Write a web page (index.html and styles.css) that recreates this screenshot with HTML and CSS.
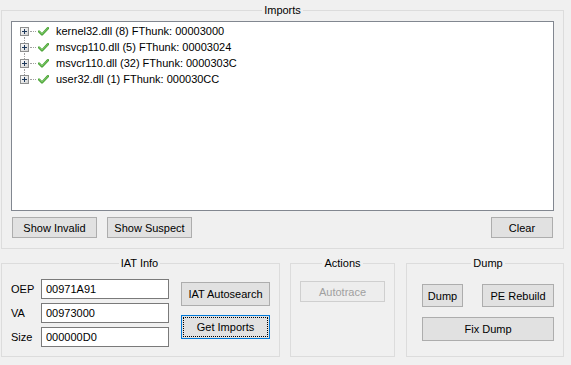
FILE: index.html
```html
<!DOCTYPE html>
<html lang="en">
<head>
    <meta charset="UTF-8">
    <title>Scylla - Imports</title>
    <link rel="stylesheet" href="styles.css">
</head>
<body>
    <div class="window">
        <fieldset class="group imports-group">
            <legend>Imports</legend>
            <div class="tree">
                <div class="tree-row">
                    <span class="expander"><svg width="9" height="9" viewBox="0 0 9 9"><defs><linearGradient id="bx" x1="0" y1="0" x2="1" y2="1"><stop offset="0" stop-color="#ffffff"/><stop offset="1" stop-color="#d2d2d2"/></linearGradient></defs><rect x="0.5" y="0.5" width="8" height="8" fill="url(#bx)" stroke="#8e8f8f"/><path d="M2 4.5h5M4.5 2v5" stroke="#1e395b" stroke-width="1"/></svg></span>
                    <span class="connector"></span>
                    <svg class="check" width="11" height="9" viewBox="0 0 11 9"><path d="M1 4.5l3 3L10 1.2" fill="none" stroke="#4ea33a" stroke-width="2.4" stroke-linecap="round" stroke-linejoin="round"/><path d="M1.4 4.6l2.6 2.5L9.8 1.5" fill="none" stroke="#7fd06a" stroke-width="0.9" stroke-linecap="round"/></svg>
                    <span class="tree-text">kernel32.dll (8) FThunk: 00003000</span>
                </div>
                <div class="tree-row">
                    <span class="expander"><svg width="9" height="9" viewBox="0 0 9 9"><rect x="0.5" y="0.5" width="8" height="8" fill="url(#bx)" stroke="#8e8f8f"/><path d="M2 4.5h5M4.5 2v5" stroke="#1e395b" stroke-width="1"/></svg></span>
                    <span class="connector"></span>
                    <svg class="check" width="11" height="9" viewBox="0 0 11 9"><path d="M1 4.5l3 3L10 1.2" fill="none" stroke="#4ea33a" stroke-width="2.4" stroke-linecap="round" stroke-linejoin="round"/><path d="M1.4 4.6l2.6 2.5L9.8 1.5" fill="none" stroke="#7fd06a" stroke-width="0.9" stroke-linecap="round"/></svg>
                    <span class="tree-text">msvcp110.dll (5) FThunk: 00003024</span>
                </div>
                <div class="tree-row">
                    <span class="expander"><svg width="9" height="9" viewBox="0 0 9 9"><rect x="0.5" y="0.5" width="8" height="8" fill="url(#bx)" stroke="#8e8f8f"/><path d="M2 4.5h5M4.5 2v5" stroke="#1e395b" stroke-width="1"/></svg></span>
                    <span class="connector"></span>
                    <svg class="check" width="11" height="9" viewBox="0 0 11 9"><path d="M1 4.5l3 3L10 1.2" fill="none" stroke="#4ea33a" stroke-width="2.4" stroke-linecap="round" stroke-linejoin="round"/><path d="M1.4 4.6l2.6 2.5L9.8 1.5" fill="none" stroke="#7fd06a" stroke-width="0.9" stroke-linecap="round"/></svg>
                    <span class="tree-text">msvcr110.dll (32) FThunk: 0000303C</span>
                </div>
                <div class="tree-row last">
                    <span class="expander"><svg width="9" height="9" viewBox="0 0 9 9"><rect x="0.5" y="0.5" width="8" height="8" fill="url(#bx)" stroke="#8e8f8f"/><path d="M2 4.5h5M4.5 2v5" stroke="#1e395b" stroke-width="1"/></svg></span>
                    <span class="connector"></span>
                    <svg class="check" width="11" height="9" viewBox="0 0 11 9"><path d="M1 4.5l3 3L10 1.2" fill="none" stroke="#4ea33a" stroke-width="2.4" stroke-linecap="round" stroke-linejoin="round"/><path d="M1.4 4.6l2.6 2.5L9.8 1.5" fill="none" stroke="#7fd06a" stroke-width="0.9" stroke-linecap="round"/></svg>
                    <span class="tree-text">user32.dll (1) FThunk: 000030CC</span>
                </div>
            </div>
            <div class="imports-buttons">
                <button class="btn btn-show">Show Invalid</button>
                <button class="btn btn-show">Show Suspect</button>
                <button class="btn btn-clear">Clear</button>
            </div>
        </fieldset>

        <div class="bottom-row">
            <fieldset class="group iat-group">
                <legend>IAT Info</legend>
                <div class="iat-fields">
                    <div class="field-row">
                        <label for="oep">OEP</label>
                        <input type="text" id="oep" value="00971A91">
                    </div>
                    <div class="field-row">
                        <label for="va">VA</label>
                        <input type="text" id="va" value="00973000">
                    </div>
                    <div class="field-row">
                        <label for="size">Size</label>
                        <input type="text" id="size" value="000000D0">
                    </div>
                </div>
                <div class="iat-buttons">
                    <button class="btn btn-iat">IAT Autosearch</button>
                    <button class="btn btn-iat focused">Get Imports</button>
                </div>
            </fieldset>

            <fieldset class="group actions-group">
                <legend>Actions</legend>
                <button class="btn btn-autotrace" disabled>Autotrace</button>
            </fieldset>

            <fieldset class="group dump-group">
                <legend>Dump</legend>
                <div class="dump-top">
                    <button class="btn btn-dump">Dump</button>
                    <button class="btn btn-rebuild">PE Rebuild</button>
                </div>
                <button class="btn btn-fix">Fix Dump</button>
            </fieldset>
        </div>
    </div>
</body>
</html>
```

FILE: styles.css
```css
body {
    margin: 0;
    padding: 0;
    width: 571px;
    height: 365px;
    background-color: #f0f0f0;
    font-family: "Liberation Sans", Arial, sans-serif;
    font-size: 11px;
    color: #000;
    overflow: hidden;
}
.window {
    padding-top: 4px;
}
.group {
    box-sizing: border-box;
    margin: 0;
    min-width: 0;
    border: 1px solid #dcdcdc;
}
.group legend {
    margin-left: auto;
    margin-right: auto;
    padding: 0 2px;
    line-height: 13px;
}
.imports-group {
    margin-left: 1px;
    width: 563px;
    padding: 4px 9px 10px 9px;
}
.tree {
    box-sizing: border-box;
    height: 190px;
    border: 1px solid #828790;
    background: #fff;
    padding-top: 1px;
}
.tree-row {
    position: relative;
    display: flex;
    align-items: center;
    height: 16px;
}
.expander {
    position: relative;
    display: block;
    width: 9px;
    height: 9px;
    margin-left: 8px;
}
.expander svg {
    display: block;
}
.tree-row .expander::after {
    content: "";
    position: absolute;
    left: 4px;
    top: 10px;
    height: 6px;
    border-left: 1px dotted #a0a0a0;
}
.tree-row.last .expander::after {
    display: none;
}
.connector {
    width: 6px;
    margin-left: 1px;
    border-top: 1px dotted #a0a0a0;
}
.check {
    display: block;
    margin-left: 2px;
}
.tree-text {
    margin-left: 7px;
    white-space: nowrap;
}
.btn {
    box-sizing: border-box;
    display: flex;
    align-items: center;
    justify-content: center;
    padding: 0;
    margin: 0;
    border: 1px solid #adadad;
    background: #e1e1e1;
    font-family: "Liberation Sans", Arial, sans-serif;
    font-size: 11px;
    color: #000;
}
.btn:disabled {
    background: #ededed;
    border-color: #cfcfcf;
    color: #a0a0a0;
}
.btn.focused {
    border-color: #0078d7;
    outline: 1px dotted #000;
    outline-offset: -3px;
}
.imports-buttons {
    display: flex;
    margin-top: 6px;
    padding: 0 1px;
    gap: 10px;
}
.btn-show {
    width: 85px;
    height: 21px;
}
.btn-clear {
    width: 62px;
    height: 21px;
    margin-left: auto;
}
.bottom-row {
    display: flex;
    margin-top: 8px;
    margin-left: 1px;
}
.iat-group {
    display: flex;
    width: 279px;
    height: 100px;
    padding: 9px 10px 9px 8px;
}
.iat-fields {
    display: flex;
    flex-direction: column;
    gap: 4px;
}
.field-row {
    display: flex;
    align-items: center;
}
.field-row label {
    width: 30px;
    padding-left: 1px;
}
.field-row input {
    box-sizing: border-box;
    width: 128px;
    height: 20px;
    margin: 0;
    padding: 0 4px;
    border: 1px solid #7a7a7a;
    background: #fff;
    font-family: "Liberation Sans", Arial, sans-serif;
    font-size: 11px;
    color: #000;
}
.iat-buttons {
    display: flex;
    flex-direction: column;
    gap: 9px;
    margin-left: 12px;
    padding-top: 3px;
}
.btn-iat {
    width: 89px;
    height: 24px;
}
.actions-group {
    width: 105px;
    height: 100px;
    margin-left: 10px;
    padding: 11px 9px 9px 9px;
}
.btn-autotrace {
    width: 85px;
    height: 21px;
}
.dump-group {
    width: 158px;
    height: 100px;
    margin-left: 11px;
    padding: 14px 9px 9px 15px;
}
.dump-top {
    display: flex;
    gap: 19px;
}
.btn-dump {
    width: 41px;
    height: 23px;
}
.btn-rebuild {
    width: 72px;
    height: 23px;
}
.btn-fix {
    width: 132px;
    height: 24px;
    margin-top: 10px;
}
```
